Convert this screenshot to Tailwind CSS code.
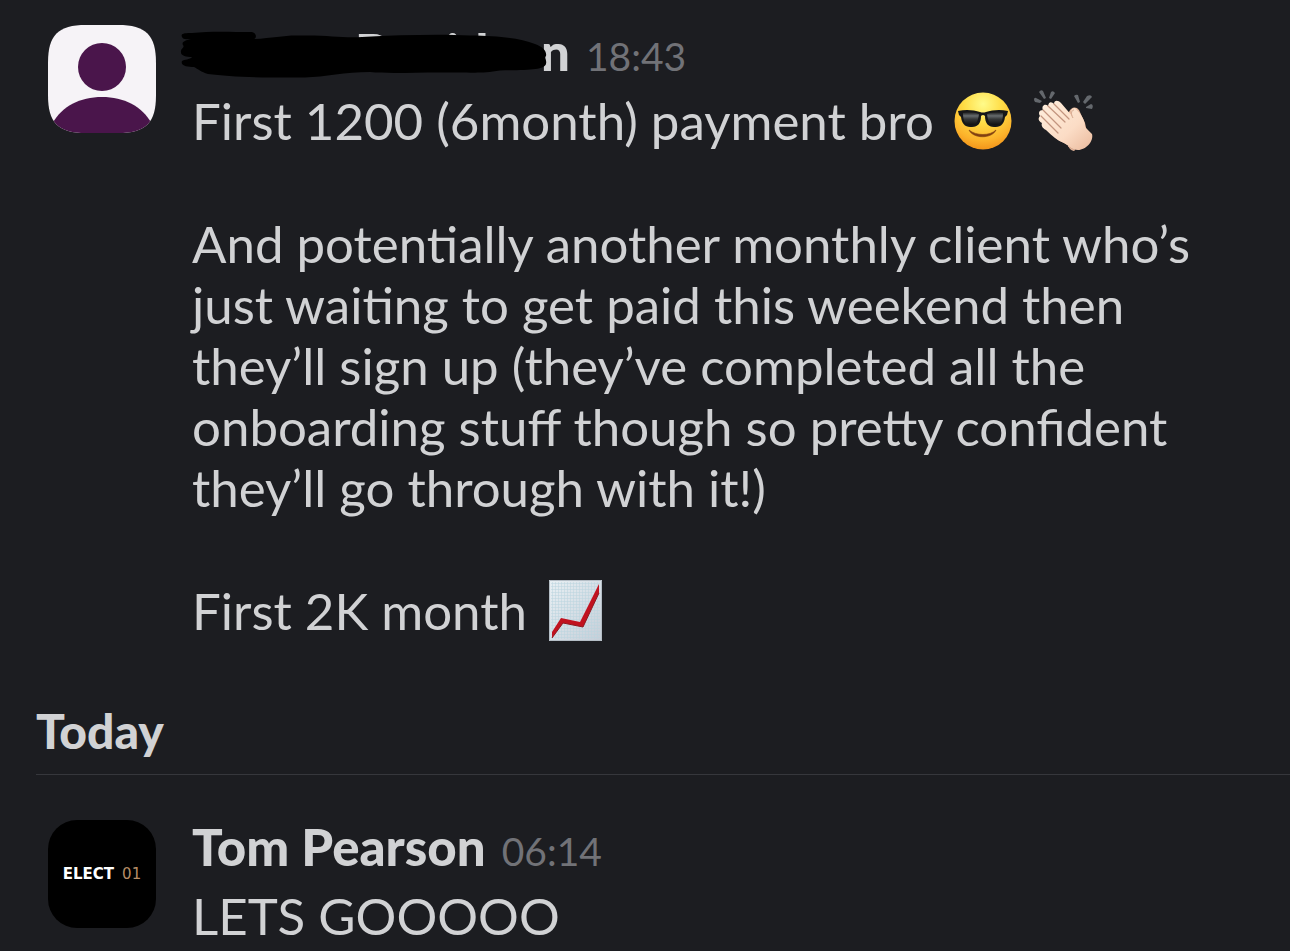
<!DOCTYPE html>
<html lang="en">

<head>
    <meta charset="UTF-8">
    <meta name="viewport" content="width=device-width, initial-scale=1.0">
    <title>Messages</title>
    <script src="https://cdn.jsdelivr.net/npm/@tailwindcss/browser@4"></script>
</head>

<body class="bg-[#1c1d21] text-[#d1d2d4] font-[Lato,sans-serif] text-[51px] leading-[61px]">
    <main class="pt-[21px]">
        <!-- First message -->
        <article class="flex items-start pl-12 pr-20">
            <svg class="w-27 h-27 mt-1 mr-9 shrink-0" viewBox="0 0 108 108" role="img" aria-label="Profile photo">
                <clipPath id="squircle">
                    <path d="M0 38C0 10 10 0 38 0H70C98 0 108 10 108 38V70C108 98 98 108 70 108H38C10 108 0 98 0 70Z" />
                </clipPath>
                <g clip-path="url(#squircle)">
                    <rect width="108" height="108" fill="#f6f3f7" />
                    <circle cx="54" cy="42" r="24" fill="#4a154b" />
                    <path d="M4 99C14 81 32 72 54 72S94 81 104 99V108H4Z" fill="#4a154b" />
                </g>
            </svg>
            <div class="min-w-0 flex-1">
                <header class="relative flex items-baseline mb-2">
                    <h2 class="flex font-black pl-[163px]">
                        <span class="w-[91px]">D</span>
                        <span class="w-[95px]">id</span>
                        <span>n</span>
                    </h2>
                    <time class="ml-4 text-[39px] leading-none text-[#717277]">18:43</time>
                    <!-- Marker strokes over the name -->
                    <svg class="absolute -left-3 top-[7px] w-[370px] h-[56px]" viewBox="180 28 370 56" aria-hidden="true">
                        <path d="M182 37C180 33 186 33 192 33C210 31 232 32 250 32C257 32 257 38 254 39C274 38 284 35 300 35.500C330 35 340 38 362 37C400 35 440 34 470 35.500C500 36 520 38 535 44C543 47 547 51 546 56C544 58 547 60 546 64C544 70 530 70 500 70.500C480 74 470 72 450 72.500C420 72 390 74 370 72C345 72 325 77 305 77.500C270 78 230 77 208 74C201 72 198 69 194 67C188 67 180 66 182 61C184 59 190 60 192 57C186 57 180 56 181 51C181 48 185 48 183 45C181 42 186 40 191 39C187 39 183 40 182 37Z" fill="#000" />
                    </svg>
                </header>
                <p class="flex items-center h-[61px]">
                    First 1200 (6month) payment bro
                    <!-- Sunglasses face -->
                    <svg class="w-[58px] h-[58px] ml-5 shrink-0" viewBox="0 0 58 58" role="img" aria-label="Sunglasses">
                        <defs>
                            <radialGradient id="face" cx=".5" cy=".2" r=".85">
                                <stop offset="0" stop-color="#fffb8a" />
                                <stop offset=".4" stop-color="#ffdc45" />
                                <stop offset=".75" stop-color="#fcb32b" />
                                <stop offset="1" stop-color="#f08c16" />
                            </radialGradient>
                            <linearGradient id="lens" x2="0" y2="1">
                                <stop offset="0" stop-color="#151515" />
                                <stop offset=".3" stop-color="#666b6d" />
                                <stop offset=".55" stop-color="#353839" />
                                <stop offset="1" stop-color="#101010" />
                            </linearGradient>
                        </defs>
                        <circle cx="29" cy="29" r="28.500" fill="url(#face)" />
                        <path d="M15 38C22 44 36 44 42 38C38 47 19 47 15 38Z" fill="#814011" stroke="#814011" stroke-width=".6" stroke-linejoin="round" />
                        <path d="M4 19C12 17 20 18 26 20Q29 21 32 20C38 18 46 17 54 19L53 23L51 25C50 34 45 35 40 35C34 35 31 31 31 24Q29 22 27 24C27 31 24 35 18 35C13 35 8 34 7 25L5 23Z" fill="#161719" />
                        <path d="M9 21C14 19 20 20 25 22C24 30 22 33 17 33C11 33 9 29 9 21ZM49 21C44 19 38 20 33 22C34 30 36 33 41 33C47 33 49 29 49 21Z" fill="url(#lens)" />
                    </svg>
                    <!-- Clapping hands -->
                    <svg class="w-[60px] h-[62px] ml-[22px] shrink-0" viewBox="0 0 60 62" role="img" aria-label="Clapping hands">
                        <defs>
                            <linearGradient id="skin" x2="1" y2="1">
                                <stop offset="0" stop-color="#fff0df" />
                                <stop offset=".6" stop-color="#fbdcc5" />
                                <stop offset="1" stop-color="#eab99c" />
                            </linearGradient>
                        </defs>
                        <path d="M5 2Q7 -1 9 1L12 8L10 9ZM0 10Q0 7 2 8L8 11L6 13L1 12ZM17 2Q19 0 21 3L17 9L15 8ZM40 6Q42 4 44 5L46 12L44 13ZM53 6Q57 4 58 7L51 14L49 12ZM57 14Q60 15 58 19L52 18L52 17Z" fill="#64686d" />
                        <path d="M35 22C37 17 42 16 45 20L51 33L53 42L40 61Q35 60 34 55L24 50L9 35Z" fill="#e8b99d" />
                        <path d="M9 20C7 16 11 13 14 16C15 11 18 12 20 14C20 10 24 10 27 13L39 27C36 22 37 18 41 18C46 23 51 29 51 37L58 44C60 51 52 60 44 60C38 60 34 55 30 53C24 51 18 46 12 40C8 38 7 35 8 33C4 31 4 28 6 26C4 23 5 20 9 20Z" fill="url(#skin)" />
                        <path d="M14 16L31 32M20 14L35 29M9 20L27 38M7 26L24 43" fill="none" stroke="#c3957f" stroke-width="1.200" stroke-linecap="round" />
                        <path d="M39 28C36 23 38 20 40 20M34 56C36 58 38 59 41 60" fill="none" stroke="#d5a88f" stroke-width="1" />
                    </svg>
                </p>
                <p class="mt-[62px]">And potentially another monthly client who’s just waiting to get paid this weekend then they’ll sign up (they’ve completed all the onboarding stuff though so pretty confident they’ll go through with it!)</p>
                <p class="flex items-center mt-[62px]">
                    First 2K month
                    <!-- Rising chart -->
                    <svg class="w-[53px] h-[61px] ml-[22px] shrink-0" viewBox="0 0 53 61" role="img" aria-label="Chart increasing">
                        <defs>
                            <linearGradient id="paper" x2="1" y2="1">
                                <stop offset="0" stop-color="#e8f0f4" />
                                <stop offset="1" stop-color="#c5ced8" />
                            </linearGradient>
                            <pattern id="grid" width="3" height="3" patternUnits="userSpaceOnUse">
                                <path d="M0 0H3M0 0V3" stroke="#b9d3de" stroke-width="1" />
                            </pattern>
                        </defs>
                        <rect width="53" height="61" fill="url(#paper)" />
                        <rect x="2" y="2" width="49" height="57" fill="url(#grid)" />
                        <path d="M.5 .5H52.500V60.500H.5Z" fill="none" stroke="#b4bdc5" />
                        <path d="M3 52L12 38L31 42L50 4V13L34 47L14 43L3 58Z" fill="#c1121f" />
                        <path d="M3 58L14 43L34 47L50 13" fill="none" stroke="#8f1820" stroke-width="1" />
                    </svg>
                </p>
            </div>
        </article>

        <!-- Day divider -->
        <section class="ml-9 mt-[59px]">
            <h1 class="text-[48px] font-black pb-[13px] border-b border-[#36373c]">Today</h1>
        </section>

        <!-- Second message -->
        <article class="flex items-start pl-12 pr-20 mt-[41px]">
            <div class="w-27 h-27 mt-1 mr-9 shrink-0 rounded-[29px] bg-black flex items-center justify-center gap-2 font-['DejaVu_Sans',sans-serif] text-[15px] leading-none font-bold">
                <span class="text-white">ELECT</span>
                <span class="text-[#b58c66] font-normal">01</span>
            </div>
            <div class="min-w-0 flex-1">
                <header class="flex items-baseline mb-2">
                    <h2 class="font-black">Tom Pearson</h2>
                    <time class="ml-4 text-[39px] leading-none text-[#717277]">06:14</time>
                </header>
                <p>LETS GOOOOO</p>
            </div>
        </article>
    </main>
</body>

</html>
